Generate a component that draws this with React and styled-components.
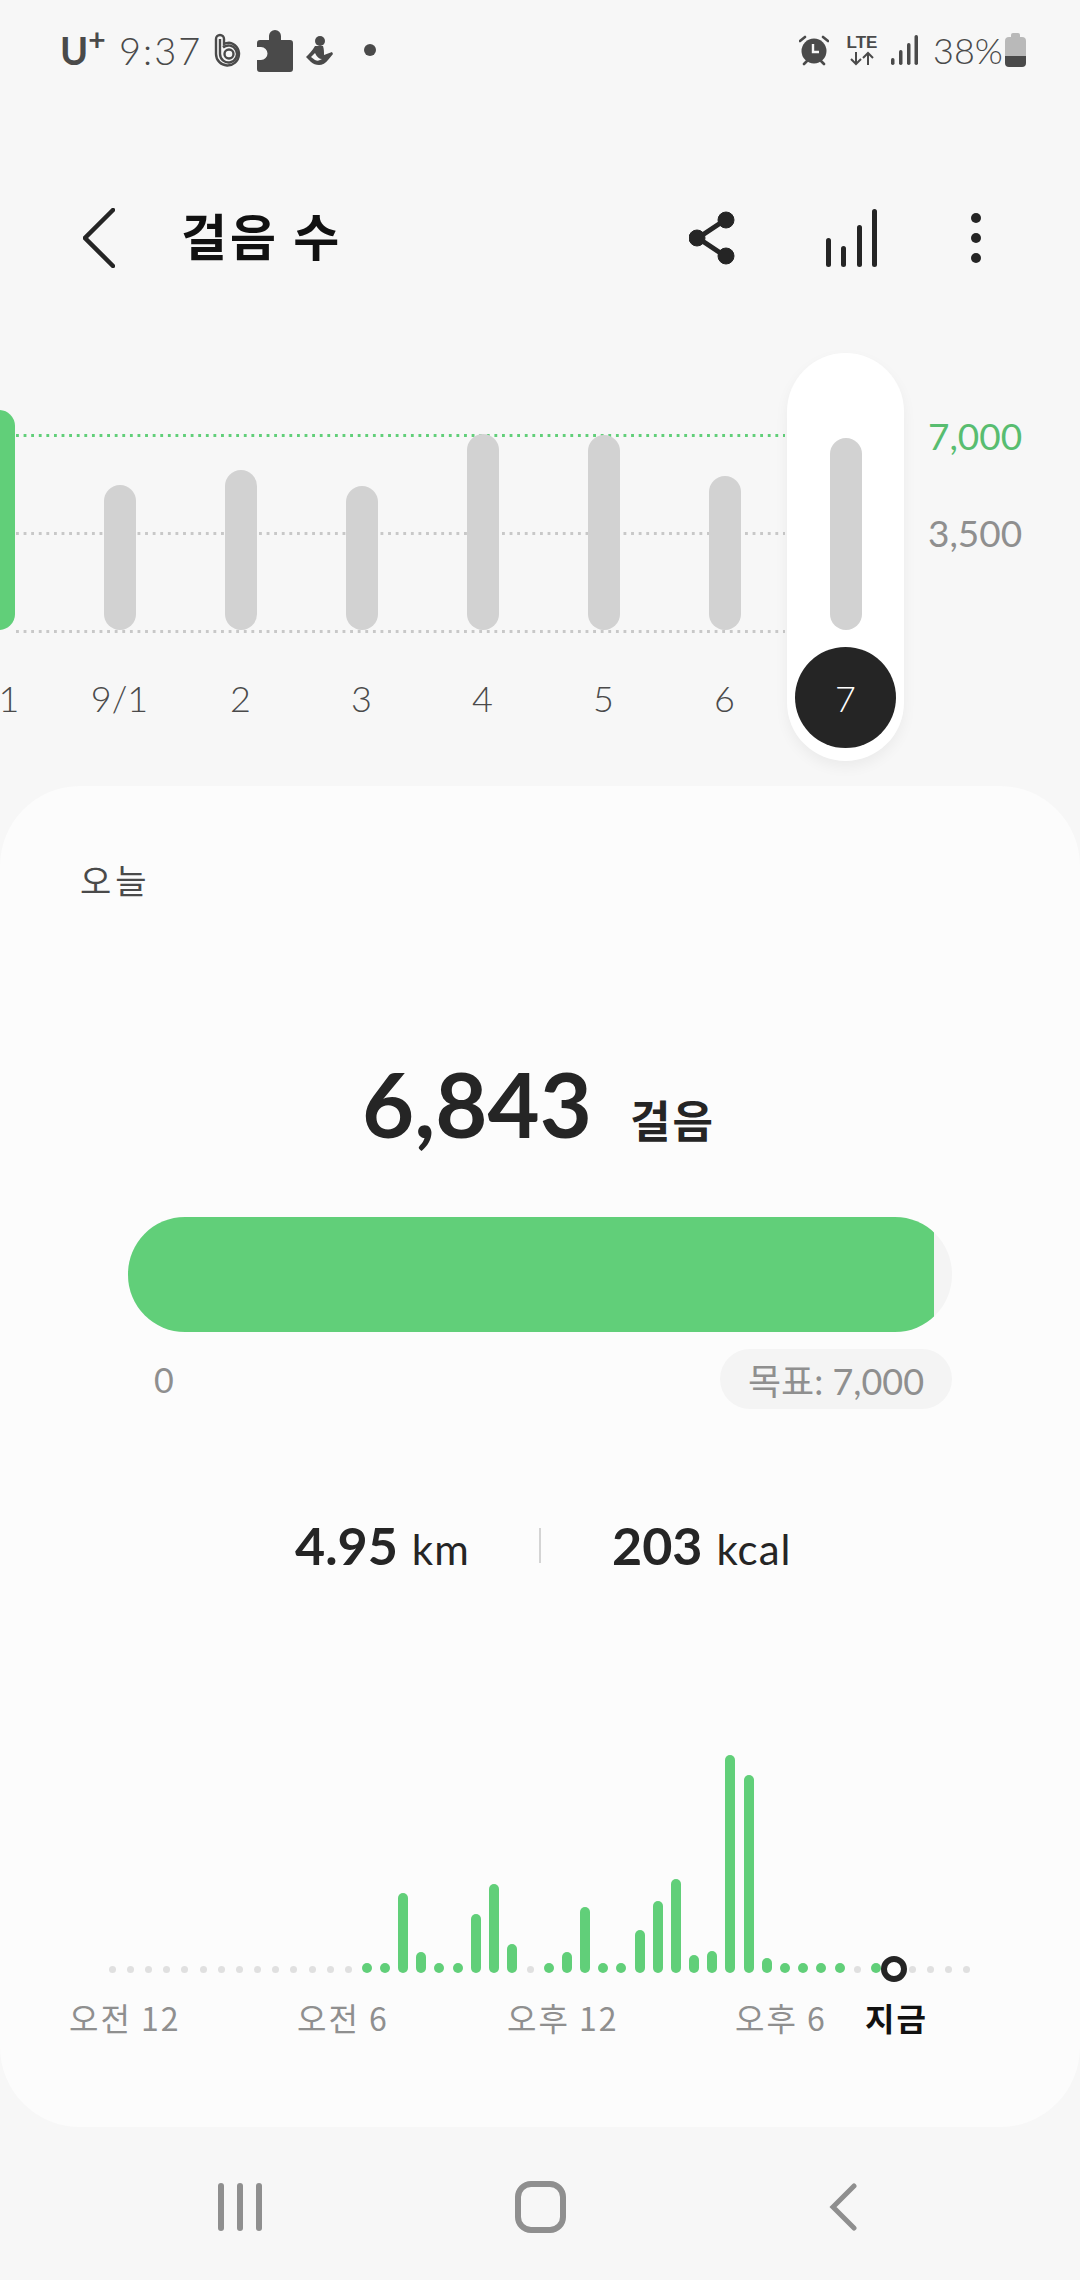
import React from "react";
import styled, { createGlobalStyle } from "styled-components";

const Latin = `"Lato", "Noto Sans CJK KR", sans-serif`;
const Green = "#61cf79";
const Ink = "#252525";
const Muted = "#8f8f8f";

const GlobalStyle = createGlobalStyle`
  html, body {
    margin: 0;
    padding: 0;
    background: #f7f7f7;
  }
  * {
    box-sizing: border-box;
  }
`;

const Page = styled.div`
  width: 1080px;
  height: 2280px;
  overflow: hidden;
  background: #f7f7f7;
  font-family: ${Latin};
  color: ${Ink};
`;

const StatusBar = styled.div`
  height: 100px;
  display: flex;
  align-items: center;
  padding: 0 54px 0 60px;
  color: #4a4a4a;
`;

const Carrier = styled.span`
  font-size: 38px;
  font-weight: 700;
  line-height: 44px;
  width: 59px;
  sup {
    font-size: 30px;
    line-height: 0;
    vertical-align: 14px;
  }
`;

const Clock = styled.span`
  font-size: 38px;
  font-weight: 300;
  letter-spacing: 2px;
  width: 95px;
`;

const StatusIcons = styled.div`
  display: flex;
  align-items: center;
  gap: 13px;
`;

const NoticeDot = styled.span`
  width: 12px;
  height: 12px;
  border-radius: 50%;
  background: #4a4a4a;
  margin-left: 18px;
`;

const StatusRight = styled.div`
  margin-left: auto;
  display: flex;
  align-items: center;
`;

const LteBox = styled.div`
  display: flex;
  flex-direction: column;
  align-items: center;
  width: 32px;
  margin: 0 13px 0 17px;
  font-size: 17px;
  font-weight: 700;
  line-height: 17px;
  font-family: "Liberation Sans", sans-serif;
`;

const Percent = styled.span`
  font-size: 36px;
  font-weight: 300;
  margin-left: 15px;
  width: 72px;
`;

const Battery = styled.div`
  position: relative;
  width: 21px;
  height: 30px;
  margin-top: 3px;
  border-radius: 4px;
  background: linear-gradient(#b9b9b9 0 62%, #4a4a4a 62% 100%);
  &::before {
    content: "";
    position: absolute;
    top: -4px;
    left: 6px;
    width: 9px;
    height: 5px;
    border-radius: 2px 2px 0 0;
    background: #b9b9b9;
  }
`;

const Header = styled.header`
  margin-top: 78px;
  height: 120px;
  display: flex;
  align-items: center;
  padding: 0 99px 0 83px;
`;

const Title = styled.h1`
  margin: 0 0 8px 66px;
  font-family: "Noto Sans CJK KR", sans-serif;
  font-size: 50px;
  font-weight: 700;
  letter-spacing: 3px;
  color: #111;
`;

const HeaderActions = styled.div`
  margin-left: auto;
  display: flex;
  align-items: center;
  gap: 91px;
  svg:nth-child(2) {
    margin-right: 3px;
  }
`;

const ChartRow = styled.section`
  position: relative;
  margin: 55px 0 0 -62px;
  display: flex;
`;

const GridLine = styled.div`
  position: absolute;
  left: 78px;
  width: 769px;
  top: ${(p) => p.$top}px;
  height: 3px;
  background-image: linear-gradient(to right, ${(p) => p.$color} 3px, transparent 3px);
  background-size: 7.6px 3px;
`;

const DayColumn = styled.div`
  position: relative;
  width: 121px;
  height: 408px;
  display: flex;
  flex-direction: column;
  align-items: center;
  ${(p) =>
    p.$active &&
    `
    width: 117px;
    margin: 0 2px;
    background: #fff;
    border-radius: 59px;
    box-shadow: 0 6px 14px rgba(0, 0, 0, 0.05);
  `}
`;

const BarSlot = styled.div`
  height: 277px;
  display: flex;
  align-items: flex-end;
`;

const DayBar = styled.div`
  width: 32px;
  height: ${(p) => p.$height}px;
  border-radius: 16px;
  background: ${(p) => p.$color};
`;

const DayLabel = styled.div`
  margin-top: 17px;
  width: 101px;
  height: 101px;
  border-radius: 50%;
  display: flex;
  align-items: center;
  justify-content: center;
  font-size: 36px;
  font-weight: 300;
  color: ${(p) => (p.$active ? "#fff" : "#4a4a4a")};
  background: ${(p) => (p.$active ? Ink : "transparent")};
`;

const YAxis = styled.div`
  margin-left: 22px;
  padding-top: 63px;
  display: flex;
  flex-direction: column;
  gap: 57px;
`;

const YLabel = styled.div`
  height: 40px;
  line-height: 40px;
  font-size: 37px;
  font-weight: 400;
  color: ${(p) => p.$color};
`;

const Card = styled.main`
  margin-top: 25px;
  height: 1341px;
  background: #fcfcfc;
  border-radius: 80px;
  overflow: hidden;
`;

const TodayLabel = styled.div`
  margin: 72px 0 0 80px;
  height: 44px;
  line-height: 44px;
  font-family: "Noto Sans CJK KR", sans-serif;
  font-size: 34px;
  letter-spacing: 4px;
  color: #4a4a4a;
`;

const CountRow = styled.div`
  margin-top: 151px;
  height: 100px;
  padding-right: 3px;
  display: flex;
  align-items: baseline;
  justify-content: center;
  gap: 38px;
`;

const CountValue = styled.span`
  font-size: 90px;
  line-height: 100px;
  font-weight: 700;
`;

const CountUnit = styled.span`
  font-family: "Noto Sans CJK KR", sans-serif;
  font-size: 44px;
  font-weight: 700;
  letter-spacing: 2px;
`;

const Track = styled.div`
  margin: 64px 0 0 128px;
  width: 824px;
  height: 115px;
  border-radius: 57px;
  overflow: hidden;
  background: #f4f4f4;
`;

const TrackFill = styled.div`
  height: 100%;
  background: ${Green};
`;

const GoalRow = styled.div`
  margin: 17px 128px 0 154px;
  display: flex;
  align-items: center;
  justify-content: space-between;
`;

const ZeroLabel = styled.span`
  font-size: 34px;
  color: ${Muted};
`;

const GoalPill = styled.div`
  width: 232px;
  height: 60px;
  border-radius: 30px;
  background: #f4f4f4;
  display: flex;
  align-items: center;
  justify-content: center;
  font-size: 36px;
  color: ${Muted};
  font-family: ${Latin};
`;

const StatsRow = styled.div`
  margin-top: 106px;
  height: 60px;
  padding-left: 295px;
  display: flex;
  align-items: center;
`;

const Stat = styled.div`
  width: ${(p) => p.$width}px;
  display: flex;
  align-items: baseline;
  gap: 14px;
`;

const StatValue = styled.span`
  font-size: 52px;
  font-weight: 700;
`;

const StatUnit = styled.span`
  font-size: 42px;
  font-weight: 400;
  letter-spacing: 1px;
`;

const StatDivider = styled.div`
  width: 2px;
  height: 35px;
  margin: 0 71px 0 0;
  background: #d4d4d4;
`;

const HourRow = styled.div`
  margin-top: 180px;
  height: 218px;
  padding-left: 103px;
  display: flex;
  align-items: flex-end;
`;

const HourSlot = styled.div`
  position: relative;
  width: 18.2px;
  display: flex;
  justify-content: center;
  align-items: flex-end;
`;

const HourBar = styled.div`
  width: 10px;
  height: ${(p) => p.$height}px;
  border-radius: 5px;
  background: ${Green};
`;

const EmptyDot = styled.div`
  width: 7px;
  height: 7px;
  border-radius: 50%;
  background: #e0e0e0;
`;

const NowRing = styled.div`
  position: absolute;
  left: 50%;
  bottom: -9px;
  width: 26px;
  height: 26px;
  margin-left: -13px;
  border: 6px solid ${Ink};
  border-radius: 50%;
  background: #fff;
`;

const AxisRow = styled.div`
  margin-top: 21px;
  height: 40px;
  padding-left: 69px;
  display: grid;
  grid-template-columns: 228px 210px 228px 130px auto;
  align-items: center;
`;

const AxisLabel = styled.span`
  font-family: "Noto Sans CJK KR", sans-serif;
  font-size: 32px;
  letter-spacing: 2px;
  font-weight: ${(p) => (p.$now ? 700 : 400)};
  color: ${(p) => (p.$now ? "#111" : Muted)};
`;

const NavBar = styled.nav`
  height: 153px;
  padding: 7px 90px 0;
  display: grid;
  grid-template-columns: repeat(3, 300px);
  align-items: center;
  justify-items: center;
`;

const RecentsIcon = styled.div`
  display: flex;
  gap: 13px;
`;

const RecentsBar = styled.span`
  width: 6px;
  height: 48px;
  border-radius: 3px;
  background: ${Muted};
`;

const HomeIcon = styled.div`
  width: 51px;
  height: 52px;
  border: 6px solid ${Muted};
  border-radius: 16px;
`;

const dayBars = [
  { label: "31", height: 220, color: Green },
  { label: "9/1", height: 145, color: "#d2d2d2" },
  { label: "2", height: 160, color: "#d2d2d2" },
  { label: "3", height: 144, color: "#d2d2d2" },
  { label: "4", height: 196, color: "#d2d2d2" },
  { label: "5", height: 195, color: "#d2d2d2" },
  { label: "6", height: 154, color: "#d2d2d2" },
  { label: "7", height: 192, color: "#d2d2d2", active: true },
];

// 0 = no steps in that half hour, 10 = just a dot
const hours = [
  0, 0, 0, 0, 0, 0, 0, 0, 0, 0, 0, 0, 0, 0, 10, 10, 80, 21, 10, 10, 59, 89, 29, 0, 10, 21, 66, 10, 10, 43, 72, 94,
  18, 22, 218, 198, 15, 10, 10, 10, 10, 0, 10, 0, 0, 0, 0, 0,
];

const BandIcon = () => (
  <svg width="30" height="36" viewBox="0 0 30 36" fill="none" stroke="#4a4a4a" strokeWidth="2.4">
    <path d="M2 7a4 4 0 0 1 8 0v5c1.500-1 3-1.400 5-1.400A11.500 11.500 0 1 1 2 22Z" />
    <path d="M6 7v15a8.500 8.500 0 1 0 3-6.500" />
    <circle cx="15" cy="22" r="4.500" />
  </svg>
);

const PuzzleIcon = () => (
  <svg width="36" height="43" viewBox="0 0 36 43" fill="#4a4a4a">
    <path d="M3 11h9V7a6 6 0 0 1 12 0v4h9a3 3 0 0 1 3 3v26a3 3 0 0 1-3 3H3a3 3 0 0 1-3-3v-9h4a6.500 6.500 0 0 0 0-13H0v-4a3 3 0 0 1 3-3Z" />
  </svg>
);

const SitIcon = () => (
  <svg width="27" height="29" viewBox="0 0 27 29" fill="#4a4a4a">
    <circle cx="14" cy="5" r="5" />
    <path d="M9 10h8c1 3 1 6 1 9l8-3 1 2-5 6c-2 3-6 5-9 5-3 0-6-1-8-3L0 21c3-3 6-6 9-11Zm0 7-4 4 4 3c2 1 3 1 5 0l2-1c-3 0-5-2-7-6Z" />
  </svg>
);

const AlarmIcon = () => (
  <svg width="30" height="32" viewBox="0 0 30 32">
    <circle cx="15" cy="17" r="12.500" fill="#4a4a4a" />
    <path d="M1 7l5-4M29 7l-5-4M5 30l3-3M25 30l-3-3" stroke="#4a4a4a" strokeWidth="2.600" strokeLinecap="round" />
    <path d="M14 10v8h6" stroke="#f7f7f7" strokeWidth="2.400" fill="none" />
  </svg>
);

const LteArrows = () => (
  <svg width="28" height="15" viewBox="0 0 28 15" fill="none" stroke="#4a4a4a" strokeWidth="2">
    <path d="M8 1v12M3 8l5 5 5-5M20 14V2M15 7l5-5 5 5" />
  </svg>
);

const SignalIcon = () => (
  <svg width="27" height="30" viewBox="0 0 27 30" fill="#4a4a4a">
    <rect x="0" y="23" width="3.500" height="7" rx="1.700" />
    <rect x="8" y="15" width="3.500" height="15" rx="1.700" />
    <rect x="16" y="8" width="3.500" height="22" rx="1.700" />
    <rect x="23.500" y="0" width="3.500" height="30" rx="1.700" />
  </svg>
);

const BackIcon = () => (
  <svg width="32" height="60" viewBox="0 0 32 60" fill="none" stroke={Ink} strokeWidth="4.500" strokeLinecap="round">
    <path d="M30 2 2 30l28 28" />
  </svg>
);

const ShareIcon = () => (
  <svg width="46" height="54" viewBox="0 0 46 54" fill={Ink} stroke={Ink}>
    <path d="M36 9 9 27l27 18" fill="none" strokeWidth="5" />
    <circle cx="37" cy="9" r="8" />
    <circle cx="8" cy="27" r="8" />
    <circle cx="37" cy="45" r="8" />
  </svg>
);

const StatsIcon = () => (
  <svg width="51" height="58" viewBox="0 0 51 58" fill={Ink}>
    <rect x="0" y="29" width="5" height="29" rx="2.500" />
    <rect x="15" y="37" width="5" height="21" rx="2.500" />
    <rect x="31" y="16" width="5" height="42" rx="2.500" />
    <rect x="46" y="0" width="5" height="58" rx="2.500" />
  </svg>
);

const MoreIcon = () => (
  <svg width="10" height="50" viewBox="0 0 10 50" fill={Ink}>
    <circle cx="5" cy="5" r="5" />
    <circle cx="5" cy="25" r="5" />
    <circle cx="5" cy="45" r="5" />
  </svg>
);

const NavBackIcon = () => (
  <svg width="33" height="48" viewBox="0 0 33 48" fill="none" stroke={Muted} strokeWidth="5" strokeLinecap="round">
    <path d="M30 3 9 24l21 21" />
  </svg>
);

const App = () => {
  return (
    <Page>
      <GlobalStyle />
      <StatusBar>
        <Carrier>
          U<sup>+</sup>
        </Carrier>
        <Clock>9:37</Clock>
        <StatusIcons>
          <BandIcon />
          <PuzzleIcon />
          <SitIcon />
          <NoticeDot />
        </StatusIcons>
        <StatusRight>
          <AlarmIcon />
          <LteBox>
            LTE
            <LteArrows />
          </LteBox>
          <SignalIcon />
          <Percent>38%</Percent>
          <Battery />
        </StatusRight>
      </StatusBar>

      <Header>
        <BackIcon />
        <Title>걸음 수</Title>
        <HeaderActions>
          <ShareIcon />
          <StatsIcon />
          <MoreIcon />
        </HeaderActions>
      </Header>

      <ChartRow>
        <GridLine $top={81} $color={Green} />
        <GridLine $top={179} $color="#c8c8c8" />
        <GridLine $top={277} $color="#c8c8c8" />
        {dayBars.map((day) => (
          <DayColumn key={day.label} $active={day.active}>
            <BarSlot>
              <DayBar $height={day.height} $color={day.color} />
            </BarSlot>
            <DayLabel $active={day.active}>{day.label}</DayLabel>
          </DayColumn>
        ))}
        <YAxis>
          <YLabel $color="#58bd70">7,000</YLabel>
          <YLabel $color={Muted}>3,500</YLabel>
        </YAxis>
      </ChartRow>

      <Card>
        <TodayLabel>오늘</TodayLabel>
        <CountRow>
          <CountValue>6,843</CountValue>
          <CountUnit>걸음</CountUnit>
        </CountRow>
        <Track>
          <TrackFill style={{ width: `${(6843 / 7000) * 824}px` }} />
        </Track>
        <GoalRow>
          <ZeroLabel>0</ZeroLabel>
          <GoalPill>목표: 7,000</GoalPill>
        </GoalRow>
        <StatsRow>
          <Stat $width={244}>
            <StatValue>4.95</StatValue>
            <StatUnit>km</StatUnit>
          </Stat>
          <StatDivider />
          <Stat>
            <StatValue>203</StatValue>
            <StatUnit>kcal</StatUnit>
          </Stat>
        </StatsRow>
        <HourRow>
          {hours.map((h, i) => (
            <HourSlot key={i}>
              {h === 0 ? <EmptyDot /> : <HourBar $height={h} />}
              {i === 43 && <NowRing />}
            </HourSlot>
          ))}
        </HourRow>
        <AxisRow>
          <AxisLabel>오전 12</AxisLabel>
          <AxisLabel>오전 6</AxisLabel>
          <AxisLabel>오후 12</AxisLabel>
          <AxisLabel>오후 6</AxisLabel>
          <AxisLabel $now>지금</AxisLabel>
        </AxisRow>
      </Card>

      <NavBar>
        <RecentsIcon>
          <RecentsBar />
          <RecentsBar />
          <RecentsBar />
        </RecentsIcon>
        <HomeIcon />
        <NavBackIcon />
      </NavBar>
    </Page>
  );
};

export default App;
